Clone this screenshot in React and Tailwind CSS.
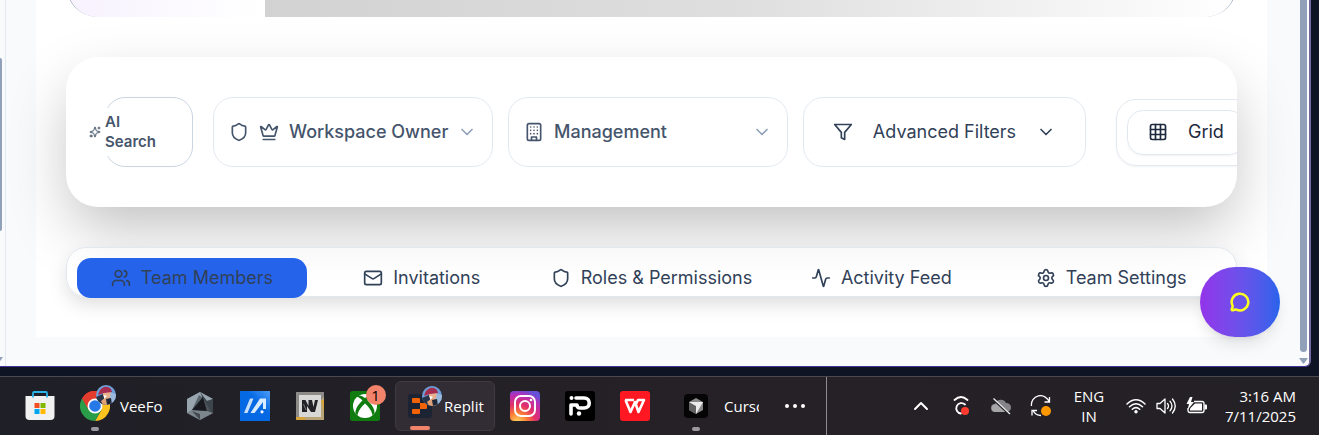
import React from "react";
import {
  Activity,
  ChevronDown,
  ChevronUp,
  Crown,
  Grid3X3,
  Mail,
  MessageCircle,
  Settings,
  Shield,
  Sparkles,
  Users,
} from "lucide-react";

function BuildingIcon() {
  return (
    <svg viewBox="0 0 24 24" className="size-5 shrink-0" fill="none" stroke="currentColor" strokeWidth="2" strokeLinecap="round" strokeLinejoin="round" aria-hidden="true">
      <rect x="4" y="2" width="16" height="20" rx="2" />
      <path d="M9 22v-4h6v4M8 6h.01M16 6h.01M12 6h.01M12 10h.01M12 14h.01M16 10h.01M16 14h.01M8 10h.01M8 14h.01" />
    </svg>
  );
}

function FunnelIcon() {
  return (
    <svg viewBox="0 0 24 24" className="size-5 shrink-0" fill="none" stroke="currentColor" strokeWidth="2" strokeLinecap="round" strokeLinejoin="round" aria-hidden="true">
      <path d="M22 3H2l8 9.46V19l4 2v-8.54z" />
    </svg>
  );
}

function FilterSelect({ label, icons, options }) {
  return (
    <label className="flex h-[70px] w-[280px] shrink-0 items-center gap-2.5 rounded-[20px] border border-slate-200 px-[15px] text-slate-600">
      {icons}
      <select aria-label={label} className="-mr-1.5 min-w-0 flex-1 appearance-none bg-transparent text-[18px] font-medium leading-7 outline-none">
        {options.map((o) => (
          <option key={o}>{o}</option>
        ))}
      </select>
      <ChevronDown className="size-5 shrink-0 text-slate-400" />
    </label>
  );
}

const tabs = [
  { name: "Team Members", Icon: Users, active: true },
  { name: "Invitations", Icon: Mail },
  { name: "Roles & Permissions", Icon: Shield },
  { name: "Activity Feed", Icon: Activity },
  { name: "Team Settings", Icon: Settings },
];

function Workspace() {
  return (
    <main className="min-w-0 flex-1 bg-slate-50 pb-[29px] pl-[30px] pr-[33px]">
      <div className="flex flex-col bg-white px-[30px] pb-10">
        <div className="-mt-[63px] flex h-20 overflow-hidden rounded-b-[32px] border-x border-slate-400">
          <div className="w-[198px] shrink-0 bg-linear-to-r from-[#f7f2fe] to-white" />
          <div className="flex-1 bg-linear-to-r from-[#d2d2d2] via-[#dfdfdf] to-white" />
        </div>

        <section aria-label="Filters" className="mt-10 flex h-[150px] items-center overflow-hidden rounded-[32px] bg-white pl-[39px] shadow-[0_25px_60px_-5px_rgba(0,0,0,0.25)]">
          <button className="flex h-[70px] w-[88px] shrink-0 items-center rounded-[20px] border border-slate-300 text-left">
            <span className="-ml-[17px] flex shrink-0 items-center gap-1 bg-white py-1 text-slate-600">
              <Sparkles className="size-3" />
              <span className="w-[52px] text-[15px] font-semibold leading-5">AI Search</span>
            </span>
          </button>
          <div className="ml-5 flex shrink-0 gap-[15px]">
            <FilterSelect
              label="Role"
              icons={
                <>
                  <Shield className="size-5 shrink-0" />
                  <Crown className="size-5 shrink-0" />
                </>
              }
              options={["Workspace Owner", "Editor", "Viewer"]}
            />
            <FilterSelect label="Department" icons={<BuildingIcon />} options={["Management", "Marketing", "Design"]} />
            <button className="flex h-[70px] w-[283px] items-center justify-center gap-5 rounded-[20px] border border-slate-200 text-[18px] font-normal leading-7 text-slate-700">
              <FunnelIcon />
              Advanced Filters
              <ChevronDown className="size-5" />
            </button>
          </div>
          <div className="ml-[30px] flex shrink-0 rounded-[20px] border border-slate-200 p-2.5 shadow-xs">
            <button className="flex h-[45px] items-center gap-5 rounded-2xl border border-slate-200 px-5 text-[18px] font-normal leading-7 text-slate-800 shadow-xs">
              <Grid3X3 className="size-5" />
              Grid
            </button>
          </div>
        </section>

        <nav aria-label="Team" className="mt-10 grid h-[50px] grid-cols-5 rounded-[20px] border border-slate-200 bg-white/50 p-2.5 shadow-[0_8px_20px_-2px_rgba(0,0,0,0.15)]">
          {tabs.map(({ name, Icon, active }) => (
            <button
              key={name}
              className={
                "flex h-10 items-center justify-center gap-2.5 whitespace-nowrap text-[18px] font-normal leading-7 text-slate-700 " +
                (active ? "rounded-[14px] bg-[#2563eb]" : "")
              }
            >
              <Icon className="size-5 shrink-0" />
              {name}
            </button>
          ))}
        </nav>
      </div>
    </main>
  );
}

function ScrollArrow() {
  return (
    <svg viewBox="0 0 9 6" className="h-1.5 w-[9px] shrink-0 text-slate-400" fill="currentColor" aria-hidden="true">
      <path d="M0 0h9L5 5.5H4z" />
    </svg>
  );
}

function Avatar() {
  return (
    <svg viewBox="0 0 20 20" className="absolute -right-1.5 -top-1.5 size-5" aria-hidden="true">
      <clipPath id="face"><circle cx="10" cy="10" r="10" /></clipPath>
      <g clipPath="url(#face)">
        <rect width="20" height="20" fill="#6f9fd8" />
        <path d="M0 12l7-3 3 11H0z" fill="#273349" />
        <path d="M13 7l7 2v11h-7z" fill="#9cb8dc" />
        <path d="M7 6h8l-1 6-3 2-4-3z" fill="#e8b08f" />
        <path d="M3 7c2-5 8-7 12-3l1 3-8 1-6 2z" fill="#a52d50" />
        <path d="M5 16l5-4 5 2-1 6H7z" fill="#dfa276" />
        <path d="M10 14l5-1 1 7h-5z" fill="#1e2536" />
        <path d="M8 10l3 1-3 3z" fill="#fff" />
      </g>
    </svg>
  );
}

function StoreIcon() {
  return (
    <svg viewBox="0 0 30 30" className="size-[30px]" aria-hidden="true">
      <path d="M.5 5h29v20q0 4-4 4h-21q-4 0-4-4z" fill="#f1f1f2" />
      <path d="M8 6.500V2.500Q8 1 9 1H21Q22 1 22 2.500V6.500" fill="none" stroke="#2bb4ea" strokeWidth="1.800" />
      <path d="M9.500 12h5v5h-5z" fill="#f25022" />
      <path d="M15.500 12h5v5h-5z" fill="#7fba00" />
      <path d="M9.500 18h5v5h-5z" fill="#00a4ef" />
      <path d="M15.500 18h5v5h-5z" fill="#ffb900" />
    </svg>
  );
}

function ChromeIcon() {
  return (
    <svg viewBox="0 0 30 30" className="size-[30px]" aria-hidden="true">
      <path d="M15 15L2 7.500A15 15 0 0 1 28 7.500H15z" fill="#e33b2e" />
      <path d="M15 7.500h13A15 15 0 0 1 15 30l6.500-11.250z" fill="#fcc31e" />
      <path d="M2 7.500A15 15 0 0 0 15 30l6.500-11.250L15 15z" fill="#2a9d48" />
      <path d="M2 7.500A15 15 0 0 1 28 7.500H15L8.500 18.750z" fill="#e33b2e" />
      <circle cx="15" cy="15" r="7.500" fill="#fff" />
      <circle cx="15" cy="15" r="5.800" fill="#2879e8" />
    </svg>
  );
}

function HexIcon() {
  return (
    <svg viewBox="0 0 28 30" className="h-[30px] w-7" aria-hidden="true">
      <path d="M14 1l13 7v14l-13 7L1 22V8z" fill="#59636b" />
      <path d="M14 1l13 7-6 2-8-6-7 15-5 3V8z" fill="#98a5ae" />
      <path d="M1 22l5-3 16 1 5 2-13 7z" fill="#7b858c" />
      <path d="M14 1l7 9 6-2v14l-5-2z" fill="#3d454c" />
      <path d="M17 6L6 19l15 1z" fill="#181a20" />
      <path d="M17 6l8 15-4-1z" fill="#4c535a" />
      <path d="M6 20l8 9v-6z" fill="#43494f" />
    </svg>
  );
}

function ArmouryIcon() {
  return (
    <svg viewBox="0 0 30 30" className="size-[30px]" aria-hidden="true">
      <defs>
        <linearGradient id="arm" x1="0" y1="1" x2="1" y2="0">
          <stop offset=".6" stopColor="#0569e3" />
          <stop offset="1" stopColor="#4b9cf8" />
        </linearGradient>
      </defs>
      <path d="M0 0h30v30H0z" fill="url(#arm)" />
      <path d="M4 22L10 7.500h3.500L7.500 22z" fill="#c6defc" />
      <path d="M10.500 22L20 7.500h6V18h-3v-7L14.500 22z" fill="#d9ebff" />
      <circle cx="22" cy="20.800" r="1.600" fill="#fff" />
    </svg>
  );
}

function GameIcon() {
  return (
    <svg viewBox="0 0 28 28" className="size-7" aria-hidden="true">
      <path d="M0 0h28v28H0z" fill="#b8a477" />
      <path d="M0 0h28v5L5 28H0z" fill="#8c8b88" />
      <path d="M0 28h10l-2-3H0zM28 20V8h-3z" fill="#d6a43a" />
      <path d="M3 3h22v22H3z" fill="#d8d8d6" />
      <path d="M6 8h3.500l3 6V8h3.500l1.500 7L19 8h3l-3 12h-4l-4-6v6H6z" fill="#222326" />
      <path d="M7.500 12l2.500 6" stroke="#777" />
    </svg>
  );
}

function XboxIcon() {
  return (
    <svg viewBox="0 0 30 30" className="size-[30px]" aria-hidden="true">
      <rect width="30" height="30" rx="2.500" fill="#107c10" />
      <circle cx="15" cy="15" r="12" fill="#fff" />
      <path d="M8 4.500c3-.5 5 1 7 2.500 2-1.500 4-3 7-2.500l1.500 1C21 6 19 8 17.500 9.500c4.500 4 7.500 9 7 13l-2 2c-.5-4.500-4-9-7.500-12-3.500 3-7 7.500-7.500 12l-2-2c-.5-4 2.500-9 7-13C11 8 9 6 6.500 5.500z" fill="#107c10" />
    </svg>
  );
}

function ReplitIcon() {
  return (
    <svg viewBox="0 0 24 24" className="size-6" aria-hidden="true">
      <rect width="24" height="24" rx="3" fill="#1c2333" />
      <path d="M5 4h6q1 0 1 1v4H5q-1 0-1-1V5q0-1 1-1zM12 9h6q1 0 1 1v4q0 1-1 1h-6zM5 15h7v4q0 1-1 1H5q-1 0-1-1v-3q0-1 1-1z" fill="#f26207" />
    </svg>
  );
}

function InstagramIcon() {
  return (
    <svg viewBox="0 0 30 30" className="size-[30px]" aria-hidden="true">
      <defs>
        <radialGradient id="ig" cx=".25" cy="1.050" r="1.100">
          <stop offset="0" stopColor="#ffdc61" />
          <stop offset=".3" stopColor="#fb7b36" />
          <stop offset=".55" stopColor="#e23068" />
          <stop offset=".85" stopColor="#b52eb8" />
          <stop offset="1" stopColor="#6650d8" />
        </radialGradient>
      </defs>
      <rect width="30" height="30" rx="4" fill="url(#ig)" />
      <g fill="none" stroke="#fff" strokeWidth="2">
        <rect x="5" y="5" width="20" height="20" rx="6" />
        <circle cx="15" cy="15" r="5" />
      </g>
      <circle cx="21" cy="9" r="1.300" fill="#fff" />
    </svg>
  );
}

function BlackTileIcon() {
  return (
    <svg viewBox="0 0 30 30" className="size-[30px]" aria-hidden="true">
      <rect width="30" height="30" rx="3" fill="#000" />
      <circle cx="6.500" cy="7" r="2" fill="#fff" />
      <path d="M11 7h8c7 0 7 10 0 10h-4q-3 0-3-3H6v9" fill="none" stroke="#fff" strokeWidth="3.600" strokeLinejoin="round" strokeLinecap="round" />
      <circle cx="14" cy="22.500" r="2.200" fill="#fff" />
    </svg>
  );
}

function WpsIcon() {
  return (
    <svg viewBox="0 0 30 30" className="size-[30px]" aria-hidden="true">
      <rect width="30" height="30" rx="3" fill="#ff1722" />
      <path d="M5 9h9M5.500 9l5 12L15 11l3.500 10L24 9h-6l-2 4" fill="none" stroke="#fff" strokeWidth="2.600" strokeLinejoin="round" />
    </svg>
  );
}

function CursorIcon() {
  return (
    <svg viewBox="0 0 24 24" className="size-6" aria-hidden="true">
      <rect width="24" height="24" rx="4" fill="#050505" />
      <path d="M12 4l7 4v8l-7 4-7-4V8z" fill="#898989" />
      <path d="M5 8l7 4v8l-7-4z" fill="#626262" />
      <path d="M5 8h14l-7 12v-8z" fill="#ededed" />
    </svg>
  );
}

function TaskIcon({ label, children }) {
  return (
    <button aria-label={label} className="flex h-full w-[55px] shrink-0 items-center justify-center">
      <span className="relative">{children}</span>
    </button>
  );
}

function SyncIcon() {
  return (
    <svg viewBox="0 0 22 22" className="size-[22px]" fill="none" stroke="#fff" strokeWidth="1.300" aria-hidden="true">
      <path d="M1.500 11A9 9 0 0 1 19 7M19.500 2v5h-5M11 20.500a9 9 0 0 1-8-5M2 20.500v-5h5" />
      <circle cx="16" cy="16" r="5" fill="#ff9800" stroke="none" />
    </svg>
  );
}

function RecorderIcon() {
  return (
    <svg viewBox="0 0 20 22" className="h-[22px] w-5" fill="none" stroke="#fff" strokeWidth="1.800" strokeLinecap="round" aria-hidden="true">
      <path d="M3.500 5q6.500-6 13 0" />
      <path d="M14 9.500a5.200 5.200 0 1 0-4 9" />
      <circle cx="14" cy="16" r="4" fill="#ff3b30" stroke="none" />
    </svg>
  );
}

function CloudIcon() {
  return (
    <svg viewBox="0 0 22 18" className="h-[18px] w-[22px]" aria-hidden="true">
      <path d="M5 15a4 4 0 0 1 0-8 6 6 0 0 1 11-1 4.500 4.500 0 0 1 1 9z" fill="#858588" />
      <path d="M3 8q3-2 6 1l6 6H5a4 4 0 0 1-2-7z" fill="#a6a6a9" />
      <path d="M4 3l15 14" stroke="#222127" strokeWidth="2" />
      <path d="M3.500 1.500L20 17" stroke="#eee" strokeWidth="1.200" />
    </svg>
  );
}

function WifiIcon() {
  return (
    <svg viewBox="0 0 20 16" className="h-4 w-5" fill="none" stroke="#fff" strokeWidth="1.500" strokeLinecap="round" aria-hidden="true">
      <path d="M1 6q9-8.500 18 0M3.500 8.700q6.500-6 13 0M6.300 11.300q3.700-3.300 7.400 0" />
      <circle cx="10" cy="13.800" r="1.700" fill="#fff" stroke="none" />
    </svg>
  );
}

function SoundIcon() {
  return (
    <svg viewBox="0 0 20 18" className="h-[18px] w-5" fill="none" stroke="#fff" strokeWidth="1.300" strokeLinecap="round" strokeLinejoin="round" aria-hidden="true">
      <path d="M1 6.500h3L9 2v14l-5-4.500H1zM11.500 6.500q2 2.500 0 5M14 4.200q4 4.800 0 9.600M16.500 2q5.500 7 0 14" />
    </svg>
  );
}

function BatteryIcon() {
  return (
    <svg viewBox="0 0 21 18" className="h-[18px] w-[21px]" aria-hidden="true">
      <path d="M8 4.500h8q2 0 2 2v7q0 2-2 2H4q-2 0-2-2V11" fill="none" stroke="#fff" strokeWidth="1.300" />
      <path d="M9 6.500h7v7H4v-2z" fill="#fff" />
      <path d="M18.500 7.500H20q1 0 1 1v3q0 1-1 1h-1.500z" fill="#fff" />
      <path d="M4 0L.5 7H3l-1.500 6L8 5H5l1.500-5z" fill="#fff" />
    </svg>
  );
}

function Tray({ label, wide, children }) {
  return (
    <button aria-label={label} className={"flex shrink-0 items-center justify-center " + (wide ? "w-10" : "w-[30px]")}>
      {children}
    </button>
  );
}

function Taskbar() {
  return (
    <footer className="flex h-[59px] border-t border-[#4b484e] bg-linear-to-r from-[#1f1f27] via-[#252126] to-[#242126] font-['Open_Sans','Noto_Sans',sans-serif] text-[15px] text-white">
      <div className="flex w-[826px] shrink-0 items-center pl-3">
        <TaskIcon label="Store"><StoreIcon /></TaskIcon>
        <button className="relative flex h-full w-[105px] shrink-0 items-center gap-2.5 pl-[13px]">
          <span className="relative shrink-0"><ChromeIcon /><Avatar /></span>
          <span className="whitespace-nowrap">VeeFo</span>
          <span className="absolute bottom-1 left-6 h-1 w-2 rounded-full bg-[#9b999f]" />
        </button>
        <TaskIcon label="Graphics"><HexIcon /></TaskIcon>
        <TaskIcon label="Armoury"><ArmouryIcon /></TaskIcon>
        <TaskIcon label="Game"><GameIcon /></TaskIcon>
        <TaskIcon label="Xbox">
          <XboxIcon />
          <span className="absolute -right-1.5 -top-1.5 flex size-5 items-center justify-center rounded-full bg-[#f4836b] text-black">1</span>
        </TaskIcon>
        <button className="relative ml-[3px] flex h-[50px] w-[100px] shrink-0 items-center gap-3 rounded-md border border-[#3f3a41] bg-[#322d34] pl-3">
          <span className="relative shrink-0"><ReplitIcon /><span className="absolute -right-1 -top-0.5"><Avatar /></span></span>
          <span>Replit</span>
          <span className="absolute bottom-0 left-3.5 h-1 w-5 rounded-full bg-[#f4836b]" />
        </button>
        <span className="w-0.5 shrink-0" />
        <TaskIcon label="Instagram"><InstagramIcon /></TaskIcon>
        <TaskIcon label="Reader"><BlackTileIcon /></TaskIcon>
        <TaskIcon label="Office"><WpsIcon /></TaskIcon>
        <button className="relative flex h-full shrink-0 items-center gap-4 pl-[22px]">
          <CursorIcon />
          <span className="w-[35px] overflow-hidden whitespace-nowrap">Curso</span>
          <span className="absolute bottom-1 left-[30px] h-1 w-2 rounded-full bg-[#9b999f]" />
        </button>
        <button aria-label="More" className="ml-[26px] flex gap-1">
          <span className="size-1 rounded-full bg-white" />
          <span className="size-1 rounded-full bg-white" />
          <span className="size-1 rounded-full bg-white" />
        </button>
      </div>
      <div className="flex min-w-0 flex-1 items-center justify-end border-l border-[#8d8b90] pr-[23px]">
        <Tray wide label="Hidden icons"><ChevronUp className="size-6" /></Tray>
        <Tray wide label="Recorder"><RecorderIcon /></Tray>
        <Tray wide label="Cloud"><CloudIcon /></Tray>
        <Tray wide label="Updates"><SyncIcon /></Tray>
        <button className="mr-1 w-14 shrink-0 text-center leading-5">ENG<br />IN</button>
        <Tray label="Network"><WifiIcon /></Tray>
        <Tray label="Volume"><SoundIcon /></Tray>
        <Tray label="Battery"><BatteryIcon /></Tray>
        <button className="w-[85px] shrink-0 whitespace-nowrap text-right leading-5">3:16 AM<br />7/11/2025</button>
      </div>
    </footer>
  );
}

export default function App() {
  return (
    <div className="min-h-screen overflow-hidden bg-[#0e1423] font-[Inter,sans-serif]">
      <div className="relative mr-2 flex overflow-hidden rounded-br-md border-b border-r-2 border-b-[#43329b] border-r-[#716a9e] bg-slate-50">
        <aside className="flex w-1.5 shrink-0 flex-col items-start justify-between overflow-hidden border-r border-slate-200 pb-[3px] pt-[58px]">
          <div className="h-[173px] w-0.5 rounded-r-sm bg-slate-400" />
          <div className="flex w-[3px] justify-end"><ScrollArrow /></div>
        </aside>
        <Workspace />
        <div className="flex w-[9px] shrink-0 flex-col items-center border-r-2 border-white pb-0.5">
          <div className="w-[7px] flex-1 rounded-b-full bg-slate-400" />
          <div className="mt-1.5"><ScrollArrow /></div>
        </div>
        <button aria-label="Open chat" className="absolute bottom-[29px] right-[29px] flex h-[70px] w-20 items-center justify-center rounded-full bg-linear-to-r from-[#9333ea] to-[#2563eb] text-[#ffff1f] shadow-lg">
          <MessageCircle className="size-5" strokeWidth={3} />
        </button>
      </div>
      <div className="h-[9px]" />
      <Taskbar />
    </div>
  );
}
